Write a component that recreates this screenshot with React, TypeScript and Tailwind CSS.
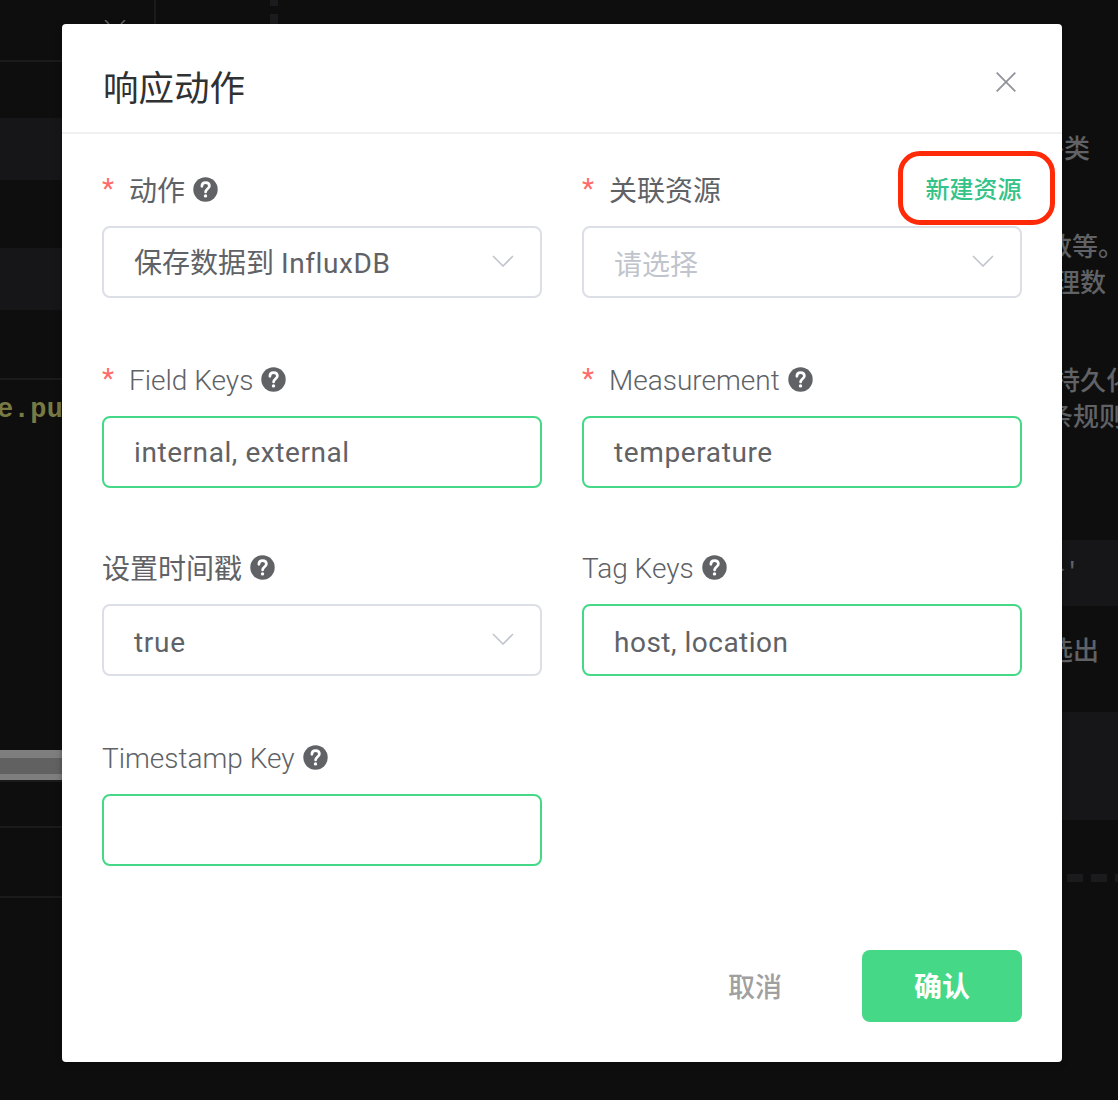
import type { ReactNode } from "react";

function HelpIcon() {
  return (
    <svg className="ml-2 size-[25px] shrink-0" viewBox="0 0 25 25" fill="none">
      <circle cx="12.5" cy="12.5" r="12.2" fill="#606266" />
      <path d="M8.9 9.3C8.9 6.9 10.3 5.6 12.6 5.6C14.9 5.6 16.4 6.9 16.4 9C16.4 11.5 12.6 12 12.6 15" stroke="#fff" strokeWidth="2.7" strokeLinecap="round" />
      <circle cx="12.5" cy="18.9" r="1.7" fill="#fff" />
    </svg>
  );
}

function Chevron() {
  return (
    <svg className="-mt-0.5 h-3 w-[22px] shrink-0" viewBox="0 0 22 12" fill="none">
      <path d="M1 1L11 11L21 1" stroke="#c0c4cc" strokeWidth="1.6" />
    </svg>
  );
}

type FieldProps = {
  label: string;
  required?: boolean;
  help?: boolean;
  select?: boolean;
  /** Labels in Chinese use the regular weight, Latin ones the light weight. */
  cjk?: boolean;
  extra?: ReactNode;
  children?: ReactNode;
};

function Field({ label, required, help, select, cjk, extra, children }: FieldProps) {
  return (
    <div>
      <div className="flex h-[74px] items-center text-[28px] text-[#606266]">
        {required && <span className="mr-[15px] w-3 text-[#ff6b6b]">*</span>}
        <span className={cjk ? "whitespace-nowrap pt-[5px]" : "whitespace-nowrap pt-[3px] font-light"}>{label}</span>
        {help && <HelpIcon />}
        {extra}
      </div>
      <div
        className={
          "flex h-[72px] items-center justify-between rounded-lg border-2 pr-[26px] pl-[30px] text-[28px] text-[#606266] " +
          (select ? "border-[#dcdfe6]" : "border-[#45d987]")
        }
      >
        <span className="whitespace-nowrap">{children}</span>
        {select && <Chevron />}
      </div>
    </div>
  );
}

function BackgroundPage() {
  return (
    <div className="absolute inset-0 flex flex-col overflow-hidden text-[26px] leading-9 text-[#606266]">
      <div className="flex h-6 shrink-0">
        <div className="flex h-6 w-[156px] items-end justify-end border-r-2 border-[#1b1b1c] pr-[28px]">
          <svg className="h-1 w-[22px]" viewBox="0 0 22 4" fill="none">
            <path d="M1 0L5 4M21 0L17 4" stroke="#606266" strokeWidth="1.6" />
          </svg>
        </div>
        <div className="ml-[114px] flex w-2 flex-col justify-between">
          <div className="h-1.5 bg-[#1b1b1d]" />
          <div className="h-2.5 bg-[#1b1b1d]" />
        </div>
      </div>
      <div className="flex flex-1 justify-between">
        <div className="w-[62px] overflow-hidden">
          <div className="mt-9 h-0.5 bg-[#1b1b1c]" />
          <div className="mt-14 h-[62px] bg-[#161618]" />
          <div className="mt-[68px] h-[62px] bg-[#161618]" />
          <div className="mt-[68px] h-0.5 bg-[#1b1b1c]" />
          <div className="mt-[12px] -ml-[3px] font-['Liberation_Mono',monospace] text-[27px] font-bold tracking-[0.4px] text-[#787a44]">e.pu</div>
          <div className="mt-[322px] h-[30px] border-t-8 border-b-6 border-[#7e7e7e] bg-[#616161]" />
          <div className="h-0.5 bg-[#1b1b1c]" />
          <div className="mt-11 h-0.5 bg-[#1b1b1c]" />
          <div className="mt-[68px] h-0.5 bg-[#1b1b1c]" />
        </div>
        <div className="w-14 overflow-hidden font-medium whitespace-nowrap">
          <div className="mt-[107px] -ml-6">各类</div>
          <div className="mt-[62px] -ml-4">数等。</div>
          <div className="-ml-2">理数</div>
          <div className="mt-[62px] -ml-2">持久化</div>
          <div className="-ml-[15px]">条规则</div>
          <div className="mt-[105px] flex h-[66px] items-center bg-[#161618]">
            <span className="-ml-[21px] font-['Liberation_Mono','Noto_Sans_CJK_SC',monospace] text-[24px]">条'</span>
          </div>
          <div className="mt-[27px] -ml-[15px]">选出</div>
          <div className="mt-[43px] h-[108px] bg-[#161618]" />
          <div className="mt-[54px] ml-[5px] flex gap-2">
            <div className="h-2 w-4 shrink-0 bg-[#1b1b1d]" />
            <div className="h-2 w-4 shrink-0 bg-[#1b1b1d]" />
            <div className="h-2 w-4 shrink-0 bg-[#1b1b1d]" />
          </div>
        </div>
      </div>
    </div>
  );
}

export default function App() {
  return (
    <div className="relative h-[1100px] w-[1118px] overflow-hidden bg-[#0e0e0e] px-[62px] pt-6 font-['Roboto','Noto_Sans_CJK_SC',sans-serif]">
      <BackgroundPage />
      <div className="relative flex h-[1038px] w-[1000px] flex-col rounded bg-white shadow-[0_2px_6px_rgba(0,0,0,0.3)]">
        <header className="flex h-[110px] shrink-0 items-center justify-between border-b-2 border-[#f0f0f0] pt-5 pr-[46px] pl-10">
          <h1 className="pt-1 pl-px text-[35.5px] text-[#303133]">响应动作</h1>
          <svg className="mb-3 size-5" viewBox="0 0 20 20" fill="none">
            <path d="M0.7 0.7L19.3 19.3M19.3 0.7L0.7 19.3" stroke="#909399" strokeWidth="1.8" />
          </svg>
        </header>
        <div className="grid grid-cols-2 gap-x-10 px-10 pt-[18px] [grid-template-rows:190px_188px_190px_146px]">
          <Field label="动作" required help select cjk>
            <span className="inline-block pt-[3px]">
              保存数据到 <span className="tracking-[0.6px]">InfluxDB</span>
            </span>
          </Field>
          <Field
            label="关联资源"
            required
            select
            cjk
            extra={
              <button className="-mt-[3px] -mr-[33px] ml-auto h-[74px] w-[157px] rounded-[22px] border-[5px] border-[#ff2a08] pt-1 pr-1.5 text-[24px] font-medium text-[#34c388]">
                新建资源
              </button>
            }
          >
            <span className="inline-block pt-[7px] text-[#c0c4cc]">请选择</span>
          </Field>
          <Field label="Field Keys" required help>
            <span className="inline-block pt-0.5 tracking-[0.57px]">internal, external</span>
          </Field>
          <Field label="Measurement" required help>
            <span className="inline-block pt-0.5 tracking-[0.62px]">temperature</span>
          </Field>
          <Field label="设置时间戳" help select cjk>
            <span className="inline-block pt-[5px] tracking-[0.7px]">true</span>
          </Field>
          <Field label="Tag Keys" help>
            <span className="inline-block pt-[5px] tracking-[0.5px]">host, location</span>
          </Field>
          <Field label="Timestamp Key" help />
        </div>
        <footer className="mt-auto mb-10 flex justify-end pr-10 text-[28px]">
          <button className="mr-[80px] pt-1 text-[27px] font-medium text-[#a0a0a0]">取消</button>
          <button className="h-[72px] w-40 rounded-lg bg-[#45d987] pt-[3px] font-bold text-white">确认</button>
        </footer>
      </div>
    </div>
  );
}
